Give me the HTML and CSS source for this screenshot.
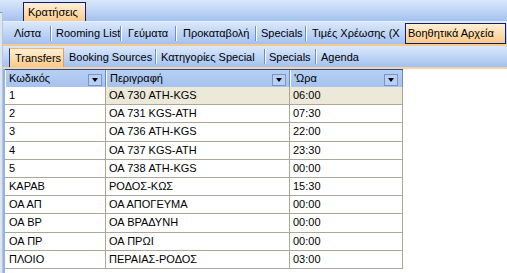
FILE: index.html
```html
<!DOCTYPE html>
<html>
<head>
<meta charset="utf-8">
<link rel="stylesheet" href="styles.css">
</head>
<body>
<div class="app">
  <div class="bar bar1">
    <div class="tab sel top-sel">Κρατήσεις</div>
  </div>
  <div class="bar bar2">
    <div class="tab w-lista">Λίστα</div><span class="sep"></span>
    <div class="tab w-rooming">Rooming List</div><span class="sep"></span>
    <div class="tab w-geum">Γεύματα</div><span class="sep"></span>
    <div class="tab w-prok">Προκαταβολή</div><span class="sep"></span>
    <div class="tab w-spec">Specials</div><span class="sep"></span>
    <div class="tab w-times">Τιμές Χρέωσης (Χ</div>
    <div class="tab sel w-voith">Βοηθητικά Αρχεία</div>
  </div>
  <div class="bar bar3">
    <div class="tab sel sub-sel w-transfers">Transfers</div>
    <div class="tab w-booking">Booking Sources</div><span class="sep"></span>
    <div class="tab w-kat">Κατηγορίες Special</div><span class="sep"></span>
    <div class="tab w-spec2">Specials</div><span class="sep"></span>
    <div class="tab">Agenda</div>
  </div>
  <div class="grid">
    <div class="ghead">
      <div class="hcell c1"><span class="htext">Κωδικός</span><span class="dd"></span></div>
      <div class="hcell c2"><span class="htext">Περιγραφή</span><span class="dd"></span></div>
      <div class="hcell c3"><span class="htext">'Ωρα</span><span class="dd"></span></div>
    </div>
    <div class="gbody">
      <div class="cell">1</div><div class="cell cur">ΟΑ 730 ATH-KGS</div><div class="cell cur">06:00</div>
      <div class="cell">2</div><div class="cell">ΟΑ 731 KGS-ATH</div><div class="cell">07:30</div>
      <div class="cell">3</div><div class="cell">ΟΑ 736 ATH-KGS</div><div class="cell">22:00</div>
      <div class="cell">4</div><div class="cell">ΟΑ 737 KGS-ATH</div><div class="cell">23:30</div>
      <div class="cell">5</div><div class="cell">ΟΑ 738 ATH-KGS</div><div class="cell">00:00</div>
      <div class="cell">ΚΑΡΑΒ</div><div class="cell">ΡΟΔΟΣ-ΚΩΣ</div><div class="cell">15:30</div>
      <div class="cell">ΟΑ ΑΠ</div><div class="cell">ΟΑ ΑΠΟΓΕΥΜΑ</div><div class="cell">00:00</div>
      <div class="cell">ΟΑ ΒΡ</div><div class="cell">ΟΑ ΒΡΑΔΥΝΗ</div><div class="cell">00:00</div>
      <div class="cell">ΟΑ ΠΡ</div><div class="cell">ΟΑ ΠΡΩΙ</div><div class="cell">00:00</div>
      <div class="cell">ΠΛΟΙΟ</div><div class="cell">ΠΕΡΑΙΑΣ-ΡΟΔΟΣ</div><div class="cell">03:00</div>
    </div>
  </div>
  <div class="edge"></div>
</div>
</body>
</html>
```
FILE: styles.css
```css
html, body {
  margin: 0;
  padding: 0;
  background: #ffffff;
}
body {
  font-family: "Liberation Sans", Arial, sans-serif;
  font-size: 11px;
  color: #000;
  width: 507px;
  height: 273px;
  overflow: hidden;
}
.app {
  position: relative;
  width: 507px;
  height: 273px;
  display: flex;
  flex-direction: column;
}
.bar {
  display: flex;
  align-items: center;
  background: linear-gradient(#dbe8fb 0%, #c2d7f6 45%, #a3c1ef 100%);
  box-sizing: border-box;
  white-space: nowrap;
  overflow: hidden;
}
.bar1 {
  height: 22px;
  padding-left: 23px;
  align-items: flex-start;
  border-bottom: 1px solid #e6effc;
}
.bar2 {
  height: 24px;
  padding-left: 10px;
  border-bottom: 2px solid #f6c889;
}
.bar3 {
  height: 23px;
  padding-left: 9px;
  border-bottom: 2px solid #f7d3a1;
}
.tab {
  box-sizing: border-box;
  padding-left: 4px;
  line-height: 18px;
  height: 18px;
  overflow: hidden;
  flex: none;
}
.sep {
  flex: none;
  width: 1px;
  height: 15px;
  background: #6f8fc6;
  border-right: 1px solid #ffffff;
}
.sel {
  background: linear-gradient(#ffefd6 0%, #fdd9a6 60%, #f9c98a 100%);
  border: 1px solid #0b1f78;
  padding-left: 4px;
}
.top-sel {
  margin-top: 2px;
  width: 63px;
  height: 20px;
  line-height: 19px;
  border-bottom: none;
}
.w-lista { width: 40px; }
.w-rooming { width: 68px; }
.w-geum { width: 53px; padding-left: 6px; }
.w-prok { width: 78px; padding-left: 6px; }
.w-spec { width: 48px; }
.w-times { width: 98px; padding-left: 5px; }
.w-voith {
  width: 101px;
  height: 21px;
  line-height: 19px;
  padding-left: 2px;
  margin-top: 1px;
}
.w-transfers {
  width: 55px;
  height: 19px;
  line-height: 18px;
  padding-left: 5px;
  margin-top: 1px;
  border-color: #f0b56e #e0a060 #f0b56e #24387f;
  border-bottom: none;
}
.w-booking { width: 91px; padding-left: 5px; }
.w-kat { width: 107px; padding-left: 4px; }
.w-spec2 { width: 49px; padding-left: 3px; }

.grid {
  flex: 1;
  margin-left: 3px;
  border-left: 2px solid #93b3e6;
  background: #ffffff;
}
.ghead {
  display: grid;
  grid-template-columns: 101px 184px 113px;
  height: 18px;
  border-top: 1px solid #2d4a8e;
  box-sizing: border-box;
  width: 398px;
}
.hcell {
  display: flex;
  align-items: flex-end;
  justify-content: space-between;
  background: linear-gradient(#b7cff2, #a6c3ee);
  border-right: 1px solid #6b8bc7;
  box-shadow: inset 1px 0 0 #ffffff;
  padding: 0 3px 1px 4px;
  box-sizing: border-box;
}
.c2 { padding-left: 4px; }
.c3 { padding-right: 4px; }
.htext {
  line-height: 13px;
  padding-bottom: 1px;
}
.dd {
  flex: none;
  width: 14px;
  height: 12px;
  box-sizing: border-box;
  border: 1px solid #7595cf;
  background: #b9d0f2;
  position: relative;
  margin-bottom: 0px;
}
.dd::after {
  content: "";
  position: absolute;
  left: 3px;
  top: 3px;
  border-left: 3px solid transparent;
  border-right: 3px solid transparent;
  border-top: 4px solid #000;
}
.gbody {
  display: grid;
  grid-template-columns: 101px 184px 113px;
  grid-auto-rows: 18.2px;
  width: 398px;
}
.cell {
  box-sizing: border-box;
  border-right: 1px solid #aca899;
  border-bottom: 1px solid #aca899;
  padding-left: 4px;
  line-height: 17px;
  white-space: nowrap;
  overflow: hidden;
}
.gbody .cell:nth-child(3n+2),
.gbody .cell:nth-child(3n) {
  padding-left: 3px;
}
.cur {
  background: #ece9d8;
}
.edge {
  position: absolute;
  left: 0;
  top: 12px;
  bottom: 0;
  width: 3px;
  box-sizing: border-box;
  background: #dde5f0;
  border-top: 1px solid #9a9a9a;
  border-right: 1px solid #b7c6dc;
}
```
